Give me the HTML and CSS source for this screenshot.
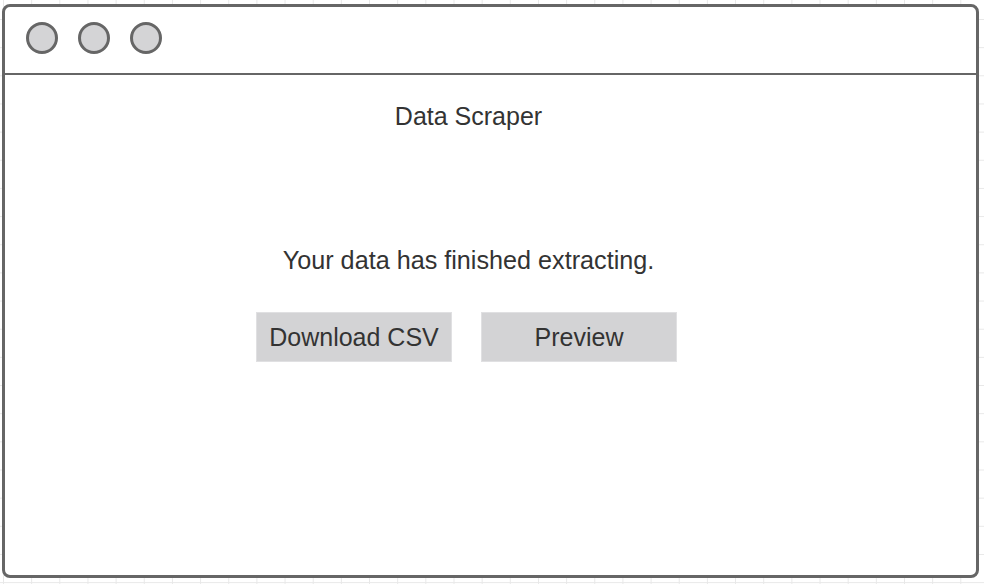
FILE: index.html
```html
<!DOCTYPE html>
<html>
<head>
<meta charset="utf-8">
<link rel="stylesheet" href="styles.css">
</head>
<body>
<div class="window">
  <div class="titlebar">
    <span class="dot"></span>
    <span class="dot"></span>
    <span class="dot"></span>
  </div>
  <div class="content">
    <div class="title">Data Scraper</div>
    <div class="message">Your data has finished extracting.</div>
    <div class="actions">
      <div class="btn">Download CSV</div>
      <div class="btn">Preview</div>
    </div>
  </div>
</div>
</body>
</html>
```
FILE: styles.css
```css
html, body {
  margin: 0;
  padding: 0;
}
body {
  width: 984px;
  height: 584px;
  overflow: hidden;
  background-color: #ffffff;
  background-image:
    linear-gradient(to right, #e8e8e8 1px, transparent 1px),
    linear-gradient(to bottom, #e8e8e8 1px, transparent 1px);
  background-size: 28.17px 28.17px;
  background-position: 3px 19px;
  font-family: "Liberation Sans", Arial, sans-serif;
  color: #333333;
  padding: 4px 5px 6px 2px;
  box-sizing: border-box;
}
.window {
  box-sizing: border-box;
  height: 574px;
  border: 3px solid #666666;
  border-radius: 8px;
  background: #ffffff;
  display: flex;
  flex-direction: column;
}
.titlebar {
  flex: none;
  height: 68px;
  border-bottom: 2.5px solid #666666;
  display: flex;
  align-items: center;
  gap: 20px;
  padding-left: 21px;
  padding-bottom: 4px;
  box-sizing: border-box;
}
.dot {
  width: 32px;
  height: 32px;
  box-sizing: border-box;
  border-radius: 50%;
  border: 3px solid #666666;
  background: #d4d4d6;
}
.content {
  display: flex;
  flex-direction: column;
  align-items: center;
  padding-right: 44px;
  padding-top: 26px;
}
.title {
  font-size: 25px;
  line-height: 30px;
}
.message {
  font-size: 25.2px;
  line-height: 30px;
  margin-top: 114px;
}
.actions {
  display: flex;
  gap: 29px;
  margin-top: 37px;
  margin-right: 4px;
}
.btn {
  width: 196px;
  height: 50px;
  background: #d3d3d5;
  border: 1px solid #e0e0e2;
  box-sizing: border-box;
  display: flex;
  align-items: center;
  justify-content: center;
  font-size: 25px;
}
```
